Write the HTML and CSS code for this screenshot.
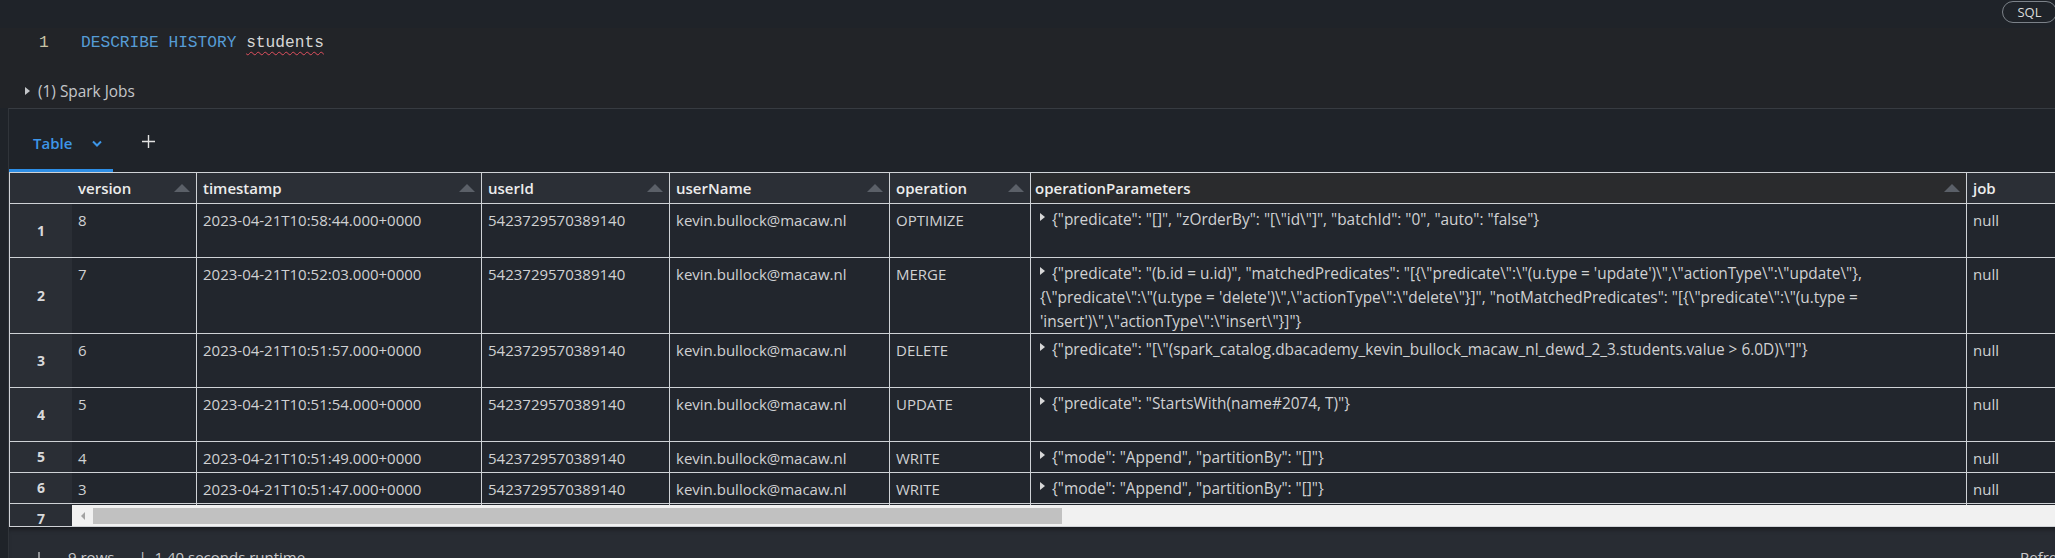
FILE: index.html
```html
<!DOCTYPE html>
<html lang="en">
<head>
  <meta charset="UTF-8" />
  <title>DESCRIBE HISTORY students</title>
  <link rel="stylesheet" href="styles.css">
</head>
<body>
  <div class="topbar">
    <span class="lang-badge">SQL</span>
  </div>

  <div class="cell">
    <div class="code-line">
      <span class="ln">1</span>
      <span class="code"><span class="kw">DESCRIBE HISTORY</span> <span class="ident">students</span></span>
    </div>
    <div class="jobs"><span class="caret"></span>(1) Spark Jobs</div>
  </div>

  <div class="results">
    <div class="tabs">
      <div class="tab">Table
        <svg class="chev" width="10" height="7" viewBox="0 0 10 7"><polyline points="1,1.5 5,5.5 9,1.5" fill="none" stroke="#3d96e8" stroke-width="2"/></svg>
      </div>
      <div class="add">
        <svg width="13" height="13" viewBox="0 0 13 13"><path d="M6.5 0v13M0 6.5h13" stroke="#e2e2e2" stroke-width="1.4"/></svg>
      </div>
    </div>

    <div class="grid-wrap">
      <div class="grid">
        <div class="row head">
          <div class="c rn"></div>
          <div class="c">version<span class="sort"></span></div>
          <div class="c">timestamp<span class="sort"></span></div>
          <div class="c">userId<span class="sort"></span></div>
          <div class="c">userName<span class="sort"></span></div>
          <div class="c">operation<span class="sort"></span></div>
          <div class="c hover">operationParameters<span class="sort"></span></div>
          <div class="c">job<span class="sort"></span></div>
        </div>

        <div class="row">
          <div class="c rn">1</div>
          <div class="c">8</div>
          <div class="c">2023-04-21T10:58:44.000+0000</div>
          <div class="c">5423729570389140</div>
          <div class="c">kevin.bullock@macaw.nl</div>
          <div class="c">OPTIMIZE</div>
          <div class="c params"><span class="exp"></span>{"predicate": "[]", "zOrderBy": "[\"id\"]", "batchId": "0", "auto": "false"}</div>
          <div class="c">null</div>
        </div>

        <div class="row tall">
          <div class="c rn">2</div>
          <div class="c">7</div>
          <div class="c">2023-04-21T10:52:03.000+0000</div>
          <div class="c">5423729570389140</div>
          <div class="c">kevin.bullock@macaw.nl</div>
          <div class="c">MERGE</div>
          <div class="c params"><span class="exp"></span>{"predicate": "(b.id = u.id)", "matchedPredicates": "[{\"predicate\":\"(u.type = 'update')\",\"actionType\":\"update\"},{\"predicate\":\"(u.type = 'delete')\",\"actionType\":\"delete\"}]", "notMatchedPredicates": "[{\"predicate\":\"(u.type = 'insert')\",\"actionType\":\"insert\"}]"}</div>
          <div class="c">null</div>
        </div>

        <div class="row">
          <div class="c rn">3</div>
          <div class="c">6</div>
          <div class="c">2023-04-21T10:51:57.000+0000</div>
          <div class="c">5423729570389140</div>
          <div class="c">kevin.bullock@macaw.nl</div>
          <div class="c">DELETE</div>
          <div class="c params"><span class="exp"></span>{"predicate": "[\"(spark_catalog.dbacademy_kevin_bullock_macaw_nl_dewd_2_3.students.value &gt; 6.0D)\"]"}</div>
          <div class="c">null</div>
        </div>

        <div class="row">
          <div class="c rn">4</div>
          <div class="c">5</div>
          <div class="c">2023-04-21T10:51:54.000+0000</div>
          <div class="c">5423729570389140</div>
          <div class="c">kevin.bullock@macaw.nl</div>
          <div class="c">UPDATE</div>
          <div class="c params"><span class="exp"></span>{"predicate": "StartsWith(name#2074, T)"}</div>
          <div class="c">null</div>
        </div>

        <div class="row short">
          <div class="c rn">5</div>
          <div class="c">4</div>
          <div class="c">2023-04-21T10:51:49.000+0000</div>
          <div class="c">5423729570389140</div>
          <div class="c">kevin.bullock@macaw.nl</div>
          <div class="c">WRITE</div>
          <div class="c params"><span class="exp"></span>{"mode": "Append", "partitionBy": "[]"}</div>
          <div class="c">null</div>
        </div>

        <div class="row short">
          <div class="c rn">6</div>
          <div class="c">3</div>
          <div class="c">2023-04-21T10:51:47.000+0000</div>
          <div class="c">5423729570389140</div>
          <div class="c">kevin.bullock@macaw.nl</div>
          <div class="c">WRITE</div>
          <div class="c params"><span class="exp"></span>{"mode": "Append", "partitionBy": "[]"}</div>
          <div class="c">null</div>
        </div>

        <!-- row 7 only peeks out beside the scrollbar -->
        <div class="row short">
          <div class="c rn">7</div>
          <div class="c"></div>
          <div class="c"></div>
          <div class="c"></div>
          <div class="c"></div>
          <div class="c"></div>
          <div class="c"></div>
          <div class="c"></div>
        </div>
      </div>

      <div class="hscroll">
        <span class="hs-btn"><span class="hs-arrow"></span></span>
        <span class="hs-thumb"></span>
      </div>
    </div>

    <div class="footer">
      <svg class="down" width="10" height="14" viewBox="0 0 10 14"><path d="M5 0v13M1 9l4 4 4-4" fill="none" stroke="#c8c9cb" stroke-width="1.3"/></svg>
      <span class="count">9 rows</span>
      <span class="runtime">| &nbsp;1.40 seconds runtime</span>
      <span class="refresh">Refreshed now</span>
    </div>
  </div>
</body>
</html>
```

FILE: styles.css
```css
* {
  margin: 0;
  padding: 0;
  box-sizing: border-box;
}
body {
  width: 2055px;
  height: 558px;
  overflow: hidden;
  background: #1f2329;
  color: #d0d1d3;
  font-family: "Open Sans", "Liberation Sans", sans-serif;
  font-size: 14px;
}

/* top bar */
.topbar {
  height: 28px;
  display: flex;
  justify-content: flex-end;
  padding-top: 1px;
}
.lang-badge {
  width: 55px;
  height: 22px;
  margin-right: -2px;
  border: 1px solid #7c8289;
  border-radius: 11px;
  font-size: 13px;
  line-height: 20px;
  text-align: center;
  color: #dcdcdc;
}

/* code cell */
.cell {
  height: 80px;
  background: #222428;
}
.code-line {
  height: 28px;
  display: flex;
  align-items: center;
  padding: 2px 0 0 39px;
  font-family: "Liberation Mono", "DejaVu Sans Mono", monospace;
  font-size: 16.2px;
}
.ln {
  width: 42px;
  color: #c9c4a6;
}
.kw {
  color: #569cd6;
}
.ident {
  color: #d6d6d6;
  text-decoration: underline wavy #e0505e;
  text-decoration-thickness: 1px;
  text-underline-offset: 4px;
}
.jobs {
  height: 20px;
  margin-top: 25px;
  padding-left: 25px;
  display: flex;
  align-items: center;
  gap: 8px;
  font-size: 15.4px;
  color: #c4c6c9;
}
.caret {
  width: 0;
  height: 0;
  border-left: 5px solid #c4c6c9;
  border-top: 4px solid transparent;
  border-bottom: 4px solid transparent;
}

/* results panel */
.results {
  margin-left: 8px;
  border-top: 1px solid #373b41;
  border-left: 1px solid #30343a;
}
.tabs {
  height: 63px;
  display: flex;
}
.tab {
  width: 104px;
  height: 63px;
  padding: 8px 0 0 24px;
  display: flex;
  align-items: center;
  border-bottom: 3px solid #2d8ee6;
  color: #3d96e8;
  font-size: 15px;
  font-weight: 600;
}
.chev {
  margin-left: 20px;
}
.add {
  margin-left: 29px;
  display: flex;
  align-items: center;
  padding-top: 2px;
}

/* data grid */
.grid-wrap {
  position: relative;
  height: 355px;
  overflow: hidden;
  border-bottom: 1px solid #cfd2d6;
}
.grid {
  width: 2160px;
  border-top: 1px solid #cfd2d6;
  border-left: 1px solid #cfd2d6;
}
.row {
  display: grid;
  grid-template-columns: 62px 125px 285px 188px 220px 141px 936px 200px;
  height: 54px;
  background: #22262d;
  font-size: 15px;
}
.row.tall {
  height: 76px;
}
.row.short {
  height: 31px;
}
.c {
  padding: 4px 6px 0;
  line-height: 24px;
  white-space: nowrap;
  overflow: hidden;
  border-right: 1px solid #cfd2d6;
  border-bottom: 1px solid #cfd2d6;
}
.rn {
  border-right: none;
  background: #2a2e35;
  font-size: 14px;
  font-weight: 700;
  color: #d8d9db;
  display: flex;
  align-items: center;
  justify-content: center;
  padding: 0;
}
.row.head {
  height: 31px;
  background: #2b2f36;
}
.head .c {
  display: flex;
  align-items: center;
  justify-content: space-between;
  padding: 0 6px 1px;
  font-size: 15px;
  font-weight: 600;
  color: #ececec;
}
.head .rn {
  background: #2b2f36;
}
.head .hover {
  background: #2a2b2d;
  padding-left: 4px;
}
.sort {
  width: 0;
  height: 0;
  border-left: 8px solid transparent;
  border-right: 8px solid transparent;
  border-bottom: 8px solid #5b6068;
}
.params {
  padding-left: 9px;
  white-space: normal;
  font-size: 15.4px;
}
.exp {
  display: inline-block;
  width: 0;
  height: 0;
  margin-right: 7px;
  vertical-align: 4px;
  border-left: 5px solid #d8d8d8;
  border-top: 4px solid transparent;
  border-bottom: 4px solid transparent;
}

/* scrollbar */
.hscroll {
  position: absolute;
  left: 63px;
  right: 0;
  bottom: 0;
  height: 21px;
  background: #f1f1f1;
  display: flex;
  align-items: center;
}
.hs-btn {
  width: 21px;
  height: 21px;
  display: flex;
  align-items: center;
  justify-content: center;
}
.hs-arrow {
  width: 0;
  height: 0;
  border-right: 4px solid #a3a3a3;
  border-top: 4px solid transparent;
  border-bottom: 4px solid transparent;
}
.hs-thumb {
  width: 969px;
  height: 16px;
  background: #c1c1c1;
}

/* footer */
.footer {
  height: 40px;
  padding: 20px 0 0 25px;
  display: flex;
  align-items: flex-start;
  background: #282c33;
  box-shadow: inset 0 5px 5px -3px rgba(0, 0, 0, 0.45);
  font-size: 15px;
  line-height: 20px;
  color: #c8c9cb;
}
.down {
  margin-top: 5px;
}
.count {
  margin-left: 24px;
}
.runtime {
  margin-left: 24px;
}
.refresh {
  width: 35px;
  margin-left: auto;
  white-space: nowrap;
}
```
